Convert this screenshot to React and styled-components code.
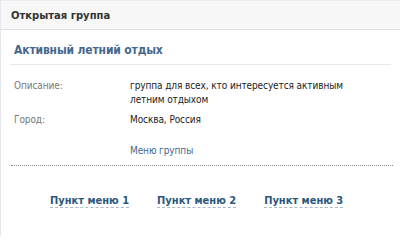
import styled, { createGlobalStyle } from "styled-components";

const Global = createGlobalStyle`
  html, body { margin: 0; padding: 0; background: #fff; }
  body { font-family: Tahoma, "DejaVu Sans", sans-serif; font-size: 11px; color: #000; }
`;

const Page = styled.div`
  width: 400px;
  height: 236px;
  box-sizing: border-box;
  border-left: 1px solid #e4e8ed;
  overflow: hidden;
`;

const Header = styled.div`
  height: 28px;
  display: flex;
  align-items: center;
  padding: 0 10px;
  background: #f7f7f7;
  border-top: 1px solid #e9ecf0;
  border-bottom: 1px solid #dde2e8;
  font-weight: bold;
  font-size: 10px;
  color: #333;
`;

const Body = styled.div`
  padding: 0 9px;
  font-family: "DejaVu Sans Condensed", "DejaVu Sans", sans-serif;
`;

const Title = styled.h1`
  margin: 0;
  padding: 13px 4px 7px;
  font-size: 12px;
  letter-spacing: -0.15px;
  font-weight: bold;
  color: #45688e;
  border-bottom: 1px solid #e8e8e8;
`;

const Info = styled.div`
  display: grid;
  grid-template-columns: 116px 1fr;
  row-gap: 6px;
  padding: 14px 4px 0;
  line-height: 14px;
  font-size: 10px;
  letter-spacing: -0.1px;
`;

const Label = styled.div`
  color: #777;
`;

const Value = styled.div`
  color: #222;
  max-width: 225px;
`;

const MenuLink = styled.a`
  display: block;
  padding: 17px 0 0 120px;
  font-size: 10px;
  letter-spacing: -0.1px;
  color: #45688e;
  text-decoration: none;
  line-height: 14px;
`;

const Divider = styled.div`
  margin: 7px 0 0 1px;
  width: 382px;
  border-bottom: 1px dotted #8a8a8a;
`;

const Menu = styled.div`
  display: flex;
  gap: 28px;
  padding: 28px 0 0 40px;
`;

const MenuItem = styled.a`
  font-size: 11px;
  font-weight: bold;
  color: #2b587a;
  text-decoration: none;
  border-bottom: 1px dashed #a9b8c8;
  line-height: 13px;
`;

const App = () => (
  <Page>
    <Global />
    <Header>Открытая группа</Header>
    <Body>
      <Title>Активный летний отдых</Title>
      <Info>
        <Label>Описание:</Label>
        <Value>группа для всех, кто интересуется активным летним отдыхом</Value>
        <Label>Город:</Label>
        <Value>Москва, Россия</Value>
      </Info>
      <MenuLink href="#">Меню группы</MenuLink>
      <Divider />
      <Menu>
        <MenuItem href="#">Пункт меню 1</MenuItem>
        <MenuItem href="#">Пункт меню 2</MenuItem>
        <MenuItem href="#">Пункт меню 3</MenuItem>
      </Menu>
    </Body>
  </Page>
);

export default App;
